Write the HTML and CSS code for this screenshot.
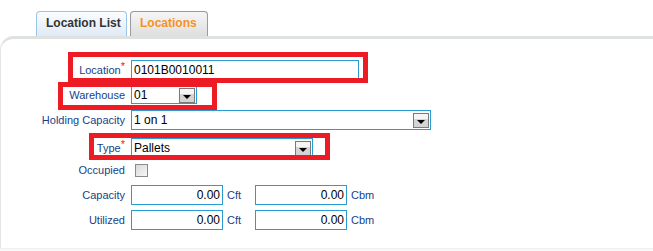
FILE: index.html
```html
<!DOCTYPE html>
<html lang="en">
<head>
  <meta charset="UTF-8">
  <title>Location</title>
  <link rel="stylesheet" href="styles.css">
</head>
<body>
  <div class="tabs">
    <div class="tab tab-active">Location List</div>
    <div class="tab tab-other">Locations</div>
  </div>

  <div class="panel">
    <div class="form">
      <div class="row">
        <span class="lbl">Location<span class="req">*</span></span>
        <div class="field text w-location">0101B0010011</div>
      </div>
      <div class="row">
        <span class="lbl">Warehouse</span>
        <div class="field select w-warehouse">01<span class="dd"></span></div>
      </div>
      <div class="row">
        <span class="lbl">Holding Capacity</span>
        <div class="field select w-holding">1 on 1<span class="dd"></span></div>
      </div>
      <div class="row row-type">
        <span class="lbl">Type<span class="req">*</span></span>
        <div class="field select w-type">Pallets<span class="dd"></span></div>
      </div>
      <div class="row row-check">
        <span class="lbl">Occupied</span>
        <span class="checkbox"></span>
      </div>
      <div class="row">
        <span class="lbl">Capacity</span>
        <div class="field num">0.00</div><span class="unit">Cft</span>
        <div class="field num">0.00</div><span class="unit">Cbm</span>
      </div>
      <div class="row">
        <span class="lbl">Utilized</span>
        <div class="field num">0.00</div><span class="unit">Cft</span>
        <div class="field num">0.00</div><span class="unit">Cbm</span>
      </div>
    </div>

    <!-- highlight boxes drawn over the form -->
    <div class="mark mark-location"></div>
    <div class="mark mark-warehouse"></div>
    <div class="mark mark-type"></div>
  </div>
  <div class="foot"></div>
</body>
</html>
```

FILE: styles.css
```css
* { margin: 0; padding: 0; box-sizing: border-box; }
body {
  font-family: 'Liberation Sans', Arial, sans-serif;
  background: #fff;
  width: 653px;
  height: 251px;
  overflow: hidden;
}
.tabs {
  display: flex;
  gap: 3px;
  padding: 11px 0 0 36px;
  height: 36px;
}
.tab {
  height: 25px;
  border: 1px solid;
  border-bottom: none;
  border-radius: 4px 4px 0 0;
  font-size: 12px;
  font-weight: bold;
  line-height: 23px;
  padding-left: 9px;
}
.tab-active {
  width: 91px;
  border-color: #99c6e6;
  background: linear-gradient(#fbfdff, #dfeaf6);
  color: #333;
}
.tab-other {
  width: 78px;
  border-color: #9a9a9a;
  background: linear-gradient(#f6f6f6, #dedede);
  color: #f7921e;
}
.panel {
  position: relative;
  height: 212px;
  border-top: 3px solid #dde1df;
  border-left: 1px solid #e4e6e5;
  border-top-left-radius: 14px;
  padding-top: 21px;
}
.form {
  display: flex;
  flex-direction: column;
  gap: 5px;
}
.row {
  display: flex;
  align-items: center;
  height: 20px;
}
.row-type { margin-top: 3px; }
.row-check { height: 17px; align-items: flex-start; }
.row-check .lbl { line-height: 14px; }
.lbl {
  width: 124px;
  margin-right: 6px;
  text-align: right;
  font-size: 11px;
  color: #15428b;
  white-space: nowrap;
}
.req {
  color: #e51b24;
  font-size: 11px;
  vertical-align: 4px;
  line-height: 0;
}
.field {
  height: 20px;
  border: 1px solid #2a9bd3;
  font-size: 12px;
  line-height: 18px;
  color: #000;
  padding-left: 2px;
  display: flex;
  align-items: center;
  background: #fff;
}
.w-location { width: 228px; }
.w-warehouse { width: 66px; height: 18px; }
.w-holding { width: 300px; }
.w-type { width: 182px; }
.dd {
  width: 16px;
  height: 15px;
  margin-left: auto;
  margin-right: 1px;
  border: 1px solid #7a7a7a;
  background: linear-gradient(#f5f5f5 0 40%, #d4d4d4 40%);
  display: flex;
  justify-content: center;
  align-items: center;
}
.dd::after {
  content: "";
  border-left: 4px solid transparent;
  border-right: 4px solid transparent;
  border-top: 4px solid #000;
  margin-top: 3px;
}
.checkbox {
  width: 13px;
  height: 13px;
  margin: 1px 0 0 4px;
  border: 1px solid #8a8a8a;
  background: linear-gradient(135deg, #d9d9d9, #f7f7f7);
}
.num {
  width: 92px;
  justify-content: flex-end;
  padding-right: 2px;
}
.unit {
  width: 32px;
  padding-left: 4px;
  font-size: 11px;
  color: #15428b;
}
.mark {
  position: absolute;
  border: 5px solid #ed1c24;
}
.mark-location { left: 67px; top: 13px; width: 300px; height: 31px; }
.mark-warehouse { left: 57px; top: 43px; width: 159px; height: 28px; }
.mark-type { left: 88px; top: 94px; width: 241px; height: 27px; }
.foot {
  height: 3px;
  background: #f7f7f7;
  border-top: 1px solid #f0f0f0;
}
```
